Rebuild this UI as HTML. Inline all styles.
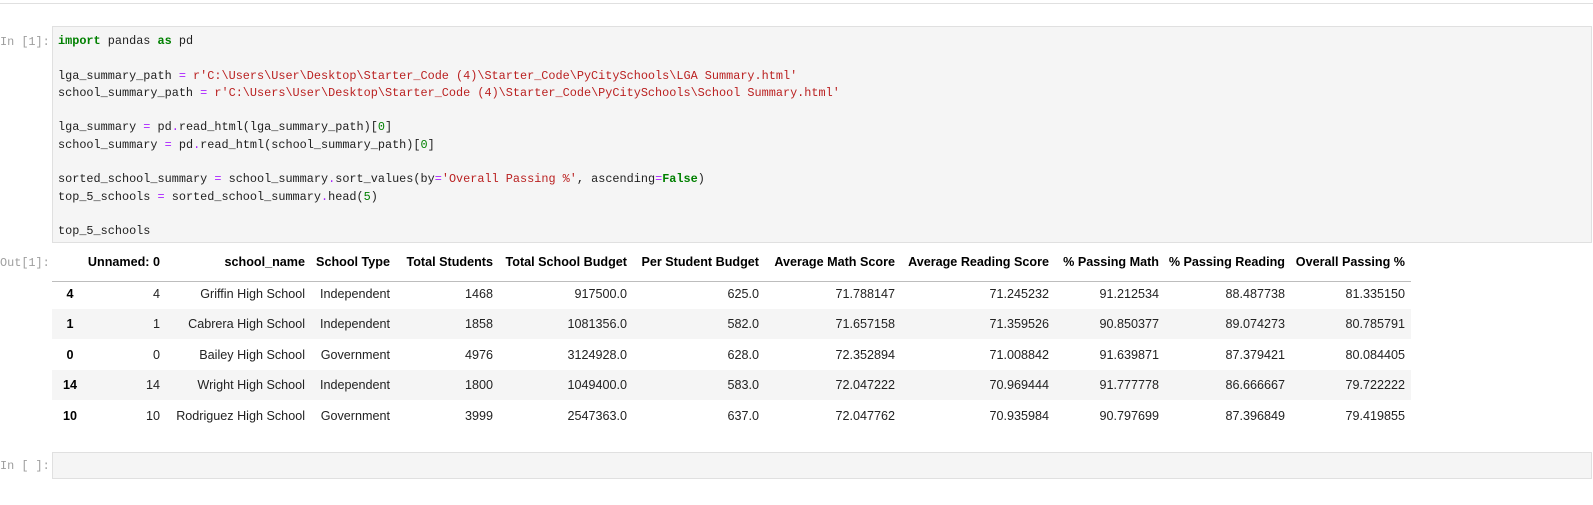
<!DOCTYPE html>
<html><head><meta charset="utf-8"><style>
body{margin:0;width:1593px;height:505px;background:#fff;position:relative;overflow:hidden;font-family:"Liberation Sans",sans-serif;}
.topline{position:absolute;left:0;top:3px;width:1593px;height:1px;background:#e0e0e0;}
.prompt{position:absolute;left:0;font-family:"Liberation Mono",monospace;font-size:11.85px;color:#9e9e9e;}
.cell{position:absolute;left:52px;width:1540px;background:#f5f5f5;border:1px solid #e0e0e0;box-sizing:border-box;}
pre{margin:0;position:absolute;left:58px;top:33px;font-family:"Liberation Mono",monospace;font-size:11.85px;line-height:17.3px;color:#212121;}
.k{color:#008000;font-weight:bold}.s{color:#ba2121}.o{color:#aa22ff}.n{color:#008000}
.c{position:absolute;font-size:12.6px;line-height:16px;white-space:nowrap;color:#222;}
.h{font-weight:bold;color:#000}
.stripe{position:absolute;left:52px;width:1359px;height:30px;background:#f5f5f5;}
</style></head><body>
<div class="topline"></div>
<div class="prompt" style="top:35px">In [1]:</div>
<div class="cell" style="top:26px;height:217px"></div>
<pre><span class="k">import</span> pandas <span class="k">as</span> pd

lga_summary_path <span class="o">=</span> <span class="s">r'C:\Users\User\Desktop\Starter_Code (4)\Starter_Code\PyCitySchools\LGA Summary.html'</span>
school_summary_path <span class="o">=</span> <span class="s">r'C:\Users\User\Desktop\Starter_Code (4)\Starter_Code\PyCitySchools\School Summary.html'</span>

lga_summary <span class="o">=</span> pd<span class="o">.</span>read_html(lga_summary_path)[<span class="n">0</span>]
school_summary <span class="o">=</span> pd<span class="o">.</span>read_html(school_summary_path)[<span class="n">0</span>]

sorted_school_summary <span class="o">=</span> school_summary<span class="o">.</span>sort_values(by<span class="o">=</span><span class="s">'Overall Passing %'</span>, ascending<span class="o">=</span><span class="k">False</span>)
top_5_schools <span class="o">=</span> sorted_school_summary<span class="o">.</span>head(<span class="n">5</span>)

top_5_schools</pre>
<div class="prompt" style="top:256px">Out[1]:</div>
<div style="position:absolute;left:52px;top:281px;width:1359px;height:1px;background:#bdbdbd"></div>
<div class="stripe" style="top:309px"></div>
<div class="stripe" style="top:370px"></div>
<div id="t"></div>
<div class="prompt" style="top:459px">In [ ]:</div>
<div class="cell" style="top:452px;height:27px"></div>
<script>
var R=[160,305,390,493,627,759,895,1049,1159,1285,1405];
var H=["Unnamed: 0","school_name","School Type","Total Students","Total School Budget","Per Student Budget","Average Math Score","Average Reading Score","% Passing Math","% Passing Reading","Overall Passing %"];
var D=[["4","4","Griffin High School","Independent","1468","917500.0","625.0","71.788147","71.245232","91.212534","88.487738","81.335150"],
["1","1","Cabrera High School","Independent","1858","1081356.0","582.0","71.657158","71.359526","90.850377","89.074273","80.785791"],
["0","0","Bailey High School","Government","4976","3124928.0","628.0","72.352894","71.008842","91.639871","87.379421","80.084405"],
["14","14","Wright High School","Independent","1800","1049400.0","583.0","72.047222","70.969444","91.777778","86.666667","79.722222"],
["10","10","Rodriguez High School","Government","3999","2547363.0","637.0","72.047762","70.935984","90.797699","87.396849","79.419855"]];
var h="";
function cell(x,y,t,cls){return '<div class="c '+cls+'" style="right:'+(1593-x)+'px;top:'+y+'px">'+t+'</div>';}
for(var i=0;i<H.length;i++)h+=cell(R[i],254,H[i],"h");
for(var r=0;r<5;r++){var y=286+r*30.4;
h+='<div class="c h" style="left:52px;width:36px;text-align:center;top:'+y+'px">'+D[r][0]+'</div>';
for(var i=0;i<11;i++)h+=cell(R[i],y,D[r][i+1],"");}
document.getElementById("t").innerHTML=h;
</script>
</body></html>
